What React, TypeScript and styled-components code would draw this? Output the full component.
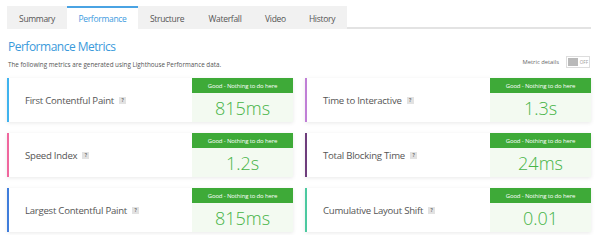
import styled, { createGlobalStyle } from "styled-components";

interface metric {
  title: string;
  value: string;
  color: string;
}

const metrics: metric[] = [
  { title: "First Contentful Paint", value: "815ms", color: "#3fb3ee" },
  { title: "Time to Interactive", value: "1.3s", color: "#c07fd6" },
  { title: "Speed Index", value: "1.2s", color: "#f0679e" },
  { title: "Total Blocking Time", value: "24ms", color: "#6e3d7c" },
  { title: "Largest Contentful Paint", value: "815ms", color: "#3f7ddb" },
  { title: "Cumulative Layout Shift", value: "0.01", color: "#4cc9a0" },
];

const tabs = [
  { name: "Summary", width: 60 },
  { name: "Performance", width: 71 },
  { name: "Structure", width: 58 },
  { name: "Waterfall", width: 58 },
  { name: "Video", width: 43 },
  { name: "History", width: 50 },
];

const GlobalStyle = createGlobalStyle`
  body {
    margin: 0;
    background: #fff;
    font-family: "Open Sans", "Noto Sans", sans-serif;
  }
`

const Page = styled.div`
  width: 600px;
  height: 235px;
  box-sizing: border-box;
  padding: 6px 9px 0 7px;
  overflow: hidden;
`
const TabBar = styled.div`
  display: flex;
  height: 21px;
  border-bottom: 2px solid #e3e3e3;
`
const Tab = styled.div<{ $active?: boolean; $width: number }>`
  display: flex;
  align-items: center;
  justify-content: center;
  width: ${(p) => p.$width}px;
  font-size: 8.5px;
  letter-spacing: -0.3px;
  color: ${(p) => (p.$active ? "#3d9be0" : "#555")};
  background: ${(p) => (p.$active ? "#fff" : "#f1f1f1")};
  border-top: 2px solid ${(p) => (p.$active ? "#4aa3e3" : "#f1f1f1")};
  box-sizing: border-box;
  height: 23px;
`
const Title = styled.h2`
  margin: 9px 0 0 1px;
  font-size: 12px;
  font-weight: 400;
  color: #3a9adb;
  letter-spacing: -0.5px;
`
const SubRow = styled.div`
  display: flex;
  justify-content: space-between;
  align-items: flex-end;
  margin-top: 1px;
`
const Note = styled.span`
  font-size: 6.3px;
  color: #555;
  margin-left: 1px;
  padding-bottom: 1px;
`
const Toggle = styled.div`
  display: flex;
  align-items: center;
  gap: 7px;
  font-size: 5.8px;
  color: #666;
  margin-right: 1px;
  margin-bottom: 2px;
`
const Switch = styled.div`
  display: flex;
  align-items: center;
  width: 24px;
  height: 12px;
  box-sizing: border-box;
  border: 1px solid #ddd;
  padding: 1px;
  gap: 2px;
  font-size: 4.5px;
  color: #999;
`
const Knob = styled.div`
  width: 10px;
  height: 100%;
  background: #b9b9b9;
`
const Grid = styled.div`
  display: grid;
  grid-template-columns: 286px 286px;
  column-gap: 12px;
  row-gap: 11px;
  margin-top: 8px;
`
const Card = styled.div<{ $color: string }>`
  display: flex;
  height: 44px;
  background: #fff;
  border-left: 2px solid ${(p) => p.$color};
  box-shadow: 0 1px 4px rgba(0, 0, 0, 0.09);
`
const Label = styled.div`
  flex: 1;
  display: flex;
  align-items: center;
  gap: 5px;
  padding-left: 16px;
  font-size: 9.6px;
  color: #555;
  letter-spacing: -0.25px;
`
const Help = styled.span`
  display: inline-flex;
  align-items: center;
  justify-content: center;
  width: 7px;
  height: 7px;
  background: #e2e2e2;
  color: #777;
  font-size: 5px;
  font-weight: 700;
`
const Result = styled.div`
  width: 101px;
  display: flex;
  flex-direction: column;
`
const Grade = styled.div`
  height: 15px;
  display: flex;
  align-items: center;
  justify-content: center;
  background: #3eaa38;
  color: #fff;
  font-size: 6px;
  letter-spacing: -0.15px;
`
const Value = styled.div`
  flex: 1;
  display: flex;
  align-items: center;
  justify-content: center;
  background: #f3faf1;
  color: #46b447;
  font-size: 18px;
  font-weight: 300;
`

const App: React.FC = () => {
  return (
    <Page>
      <GlobalStyle />
      <TabBar>
        {tabs.map((t) => (
          <Tab key={t.name} $width={t.width} $active={t.name === "Performance"}>{t.name}</Tab>
        ))}
      </TabBar>

      <Title>Performance Metrics</Title>
      <SubRow>
        <Note>The following metrics are generated using Lighthouse Performance data.</Note>
        <Toggle>
          Metric details
          <Switch>
            <Knob />
            OFF
          </Switch>
        </Toggle>
      </SubRow>

      <Grid>
        {metrics.map((m) => (
          <Card key={m.title} $color={m.color}>
            <Label>
              {m.title}
              <Help>?</Help>
            </Label>
            <Result>
              <Grade>Good - Nothing to do here</Grade>
              <Value>{m.value}</Value>
            </Result>
          </Card>
        ))}
      </Grid>
    </Page>
  );
};

export default App;
